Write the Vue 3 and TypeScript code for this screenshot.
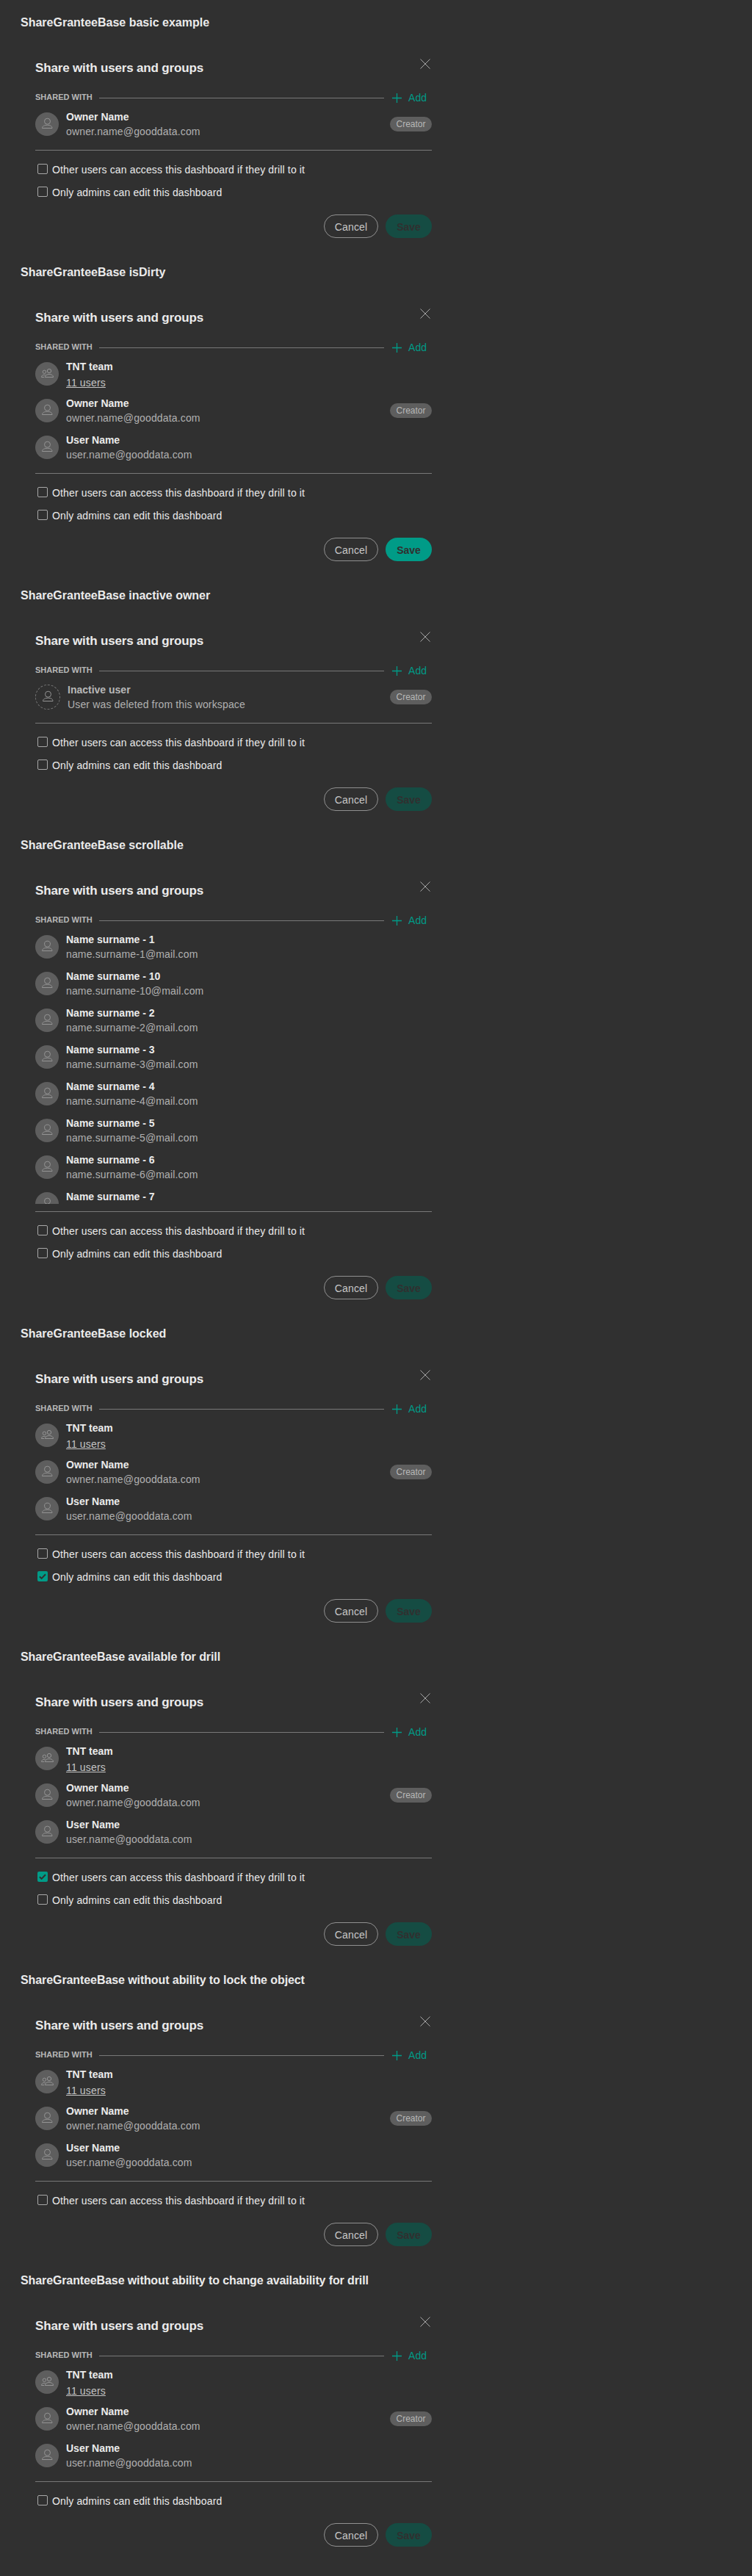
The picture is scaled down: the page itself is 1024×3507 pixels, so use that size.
<script setup lang="ts">
interface Grantee {
  name: string
  detail: string
  kind: 'user' | 'group' | 'inactive'
  creator?: boolean
}

interface Option {
  label: string
  checked: boolean
}

interface Story {
  title: string
  tracking: number
  grantees: Grantee[]
  options: Option[]
  dirty?: boolean
}

const owner: Grantee = { name: 'Owner Name', detail: 'owner.name@gooddata.com', kind: 'user', creator: true }
const user: Grantee = { name: 'User Name', detail: 'user.name@gooddata.com', kind: 'user' }
const team: Grantee = { name: 'TNT team', detail: '11 users', kind: 'group' }
const inactive: Grantee = {
  name: 'Inactive user',
  detail: 'User was deleted from this workspace',
  kind: 'inactive',
  creator: true,
}
const many: Grantee[] = [1, 10, 2, 3, 4, 5, 6, 7].map((n) => ({
  name: `Name surname - ${n}`,
  detail: `name.surname-${n}@mail.com`,
  kind: 'user',
}))

const drill = (checked = false): Option => ({
  label: 'Other users can access this dashboard if they drill to it',
  checked,
})
const lock = (checked = false): Option => ({ label: 'Only admins can edit this dashboard', checked })

const everyone = [team, owner, user]

const stories: Story[] = [
  { title: 'basic example', tracking: 0, grantees: [owner], options: [drill(), lock()] },
  { title: 'isDirty', tracking: 0, grantees: everyone, options: [drill(), lock()], dirty: true },
  { title: 'inactive owner', tracking: -0.02, grantees: [inactive], options: [drill(), lock()] },
  { title: 'scrollable', tracking: -0.02, grantees: many, options: [drill(), lock()] },
  { title: 'locked', tracking: 0, grantees: everyone, options: [drill(), lock(true)] },
  { title: 'available for drill', tracking: -0.075, grantees: everyone, options: [drill(true), lock()] },
  { title: 'without ability to lock the object', tracking: -0.085, grantees: everyone, options: [drill()] },
  {
    title: 'without ability to change availability for drill',
    tracking: -0.11,
    grantees: everyone,
    options: [lock()],
  },
]
</script>

<template>
  <main class="page">
    <section v-for="story in stories" :key="story.title" class="story">
      <h4 class="story-title" :style="{ letterSpacing: story.tracking + 'px' }">ShareGranteeBase {{ story.title }}</h4>
      <div class="dialog">
        <header class="dialog-header">
          <h3>Share with users and groups</h3>
          <button class="close" aria-label="Close">
            <svg width="14" height="14" viewBox="0 0 14 14"><path d="M.5 .5l13 13M13.5 .5l-13 13" /></svg>
          </button>
        </header>

        <div class="shared-with">
          <span class="shared-label">SHARED WITH</span>
          <span class="rule"></span>
          <button class="add">
            <svg width="13" height="13" viewBox="0 0 13 13"><path d="M6.5 0v13M0 6.5h13" /></svg>
            <span>Add</span>
          </button>
        </div>

        <div class="grantees">
          <div v-for="g in story.grantees" :key="g.name" class="grantee" :class="g.kind">
            <span class="avatar">
              <svg v-if="g.kind === 'group'" width="32" height="32" viewBox="0 0 32 32">
                <circle cx="19" cy="12" r="2.7" />
                <path d="M13.4 20.5c0-2.6 2.6-4 5.6-4s5.6 1.4 5.6 4z" />
                <circle cx="12.4" cy="13.3" r="2.2" />
                <path d="M12.2 20.5h-3.7c0-2 1.5-3.1 3.7-3.1.9 0 1.6.1 2.1.4" />
              </svg>
              <svg v-else width="32" height="32" viewBox="0 0 32 32">
                <circle cx="16.5" cy="12.2" r="4" />
                <path d="M9.5 21.5c0-2.9 3-4.2 7-4.2s6.5 1.3 6.5 4.2z" />
              </svg>
            </span>
            <div class="info">
              <div class="name">{{ g.name }}</div>
              <div class="detail"><span>{{ g.detail }}</span></div>
            </div>
            <span v-if="g.creator" class="badge">Creator</span>
          </div>
        </div>

        <div class="options">
          <label v-for="o in story.options" :key="o.label" class="option">
            <span class="box" :class="{ checked: o.checked }">
              <svg v-if="o.checked" width="14" height="14" viewBox="0 0 14 14"><path d="M2.9 7.2l2.7 2.7 5.4-5.7" /></svg>
            </span>
            <span class="option-label">{{ o.label }}</span>
          </label>
        </div>

        <footer class="actions">
          <button class="btn cancel">Cancel</button>
          <button class="btn save" :disabled="!story.dirty">Save</button>
        </footer>
      </div>
    </section>
  </main>
</template>

<style>
body {
  background: #303030;
}
</style>

<style scoped>
.page {
  box-sizing: border-box;
  padding: 12px 28px;
  background: #303030;
  color: #ebebeb;
  font-family: "Liberation Sans", Arial, sans-serif;
  font-size: 14px;
}

button {
  padding: 0;
  border: 0;
  background: none;
  font: inherit;
}

svg {
  display: block;
  fill: none;
  stroke: currentColor;
}

.story {
  padding-bottom: 28px;
}

.story-title {
  margin: 0;
  font-size: 16px;
  line-height: 38px;
}

.dialog {
  width: 540px;
  margin-left: 20px;
  padding-top: 22px;
}

.dialog-header {
  display: flex;
  justify-content: space-between;
  height: 50px;
}

.dialog-header h3 {
  margin: 0;
  font-size: 17px;
  line-height: 41px;
  letter-spacing: -0.16px;
}

.close {
  align-self: flex-start;
  margin: 8px 2px 0 0;
  color: #a8a8a8;
}

.shared-with {
  display: flex;
  align-items: flex-start;
  height: 22px;
}

.shared-label {
  width: 78px;
  font-size: 11px;
  font-weight: 700;
  line-height: 20px;
  color: #b8b8b8;
}

.rule {
  flex: 1;
  margin: 11px 11px 0 9px;
  border-top: 1px solid #787878;
}

.add {
  display: flex;
  align-items: flex-start;
  gap: 9px;
  width: 54px;
  padding-top: 3px;
  color: #009b87;
  line-height: 16px;
  letter-spacing: 0.1px;
}

.add svg {
  margin-top: 2px;
  stroke-width: 1.3;
}

.grantees {
  max-height: 375px;
  overflow: hidden;
}

.grantee {
  display: flex;
  align-items: center;
  height: 50px;
}

.avatar {
  flex: none;
  width: 32px;
  height: 32px;
  border-radius: 50%;
  background: #5e5e5e;
  color: #949494;
}

.inactive .avatar {
  border: 1px dashed #787878;
  background: none;
}

.info {
  flex: 1;
  margin-left: 10px;
  line-height: 20px;
}

.name {
  font-weight: 700;
}

.detail {
  color: #b0b0b0;
  letter-spacing: 0.15px;
}

.inactive .name {
  color: #b8b8b8;
}

.group .info {
  padding-top: 2px;
}

.group .detail {
  padding-top: 2px;
  color: #c4c4c4;
}

.group .detail span {
  text-decoration: underline;
}

.badge {
  width: 57px;
  height: 20px;
  border-radius: 10px;
  background: #5e5e5e;
  color: #b8b8b8;
  font-size: 12px;
  line-height: 20px;
  text-align: center;
}

.options {
  margin-top: 10px;
  padding-top: 10px;
  border-top: 1px solid #787878;
}

.option {
  display: flex;
  align-items: flex-start;
  height: 31px;
}

.box {
  box-sizing: border-box;
  width: 14px;
  height: 14px;
  margin: 8px 6px 0 3px;
  border: 1px solid #a8a8a8;
  border-radius: 2px;
}

.box.checked {
  border: 0;
  background: #009b87;
  color: #303030;
}

.box.checked path {
  stroke-width: 2;
}

.option-label {
  padding-top: 8px;
  line-height: 16px;
  letter-spacing: 0.14px;
}

.actions {
  display: flex;
  justify-content: flex-end;
  gap: 10px;
  padding-top: 15px;
}

.btn {
  box-sizing: border-box;
  height: 32px;
  padding-top: 2px;
  border-radius: 16px;
}

.cancel {
  width: 74px;
  border: 1px solid #909090;
  color: #c8c8c8;
  letter-spacing: 0.12px;
}

.save {
  width: 63px;
  background: #009b87;
  color: #303030;
  font-weight: 700;
}

.save:disabled {
  background: #154c43;
}
</style>
